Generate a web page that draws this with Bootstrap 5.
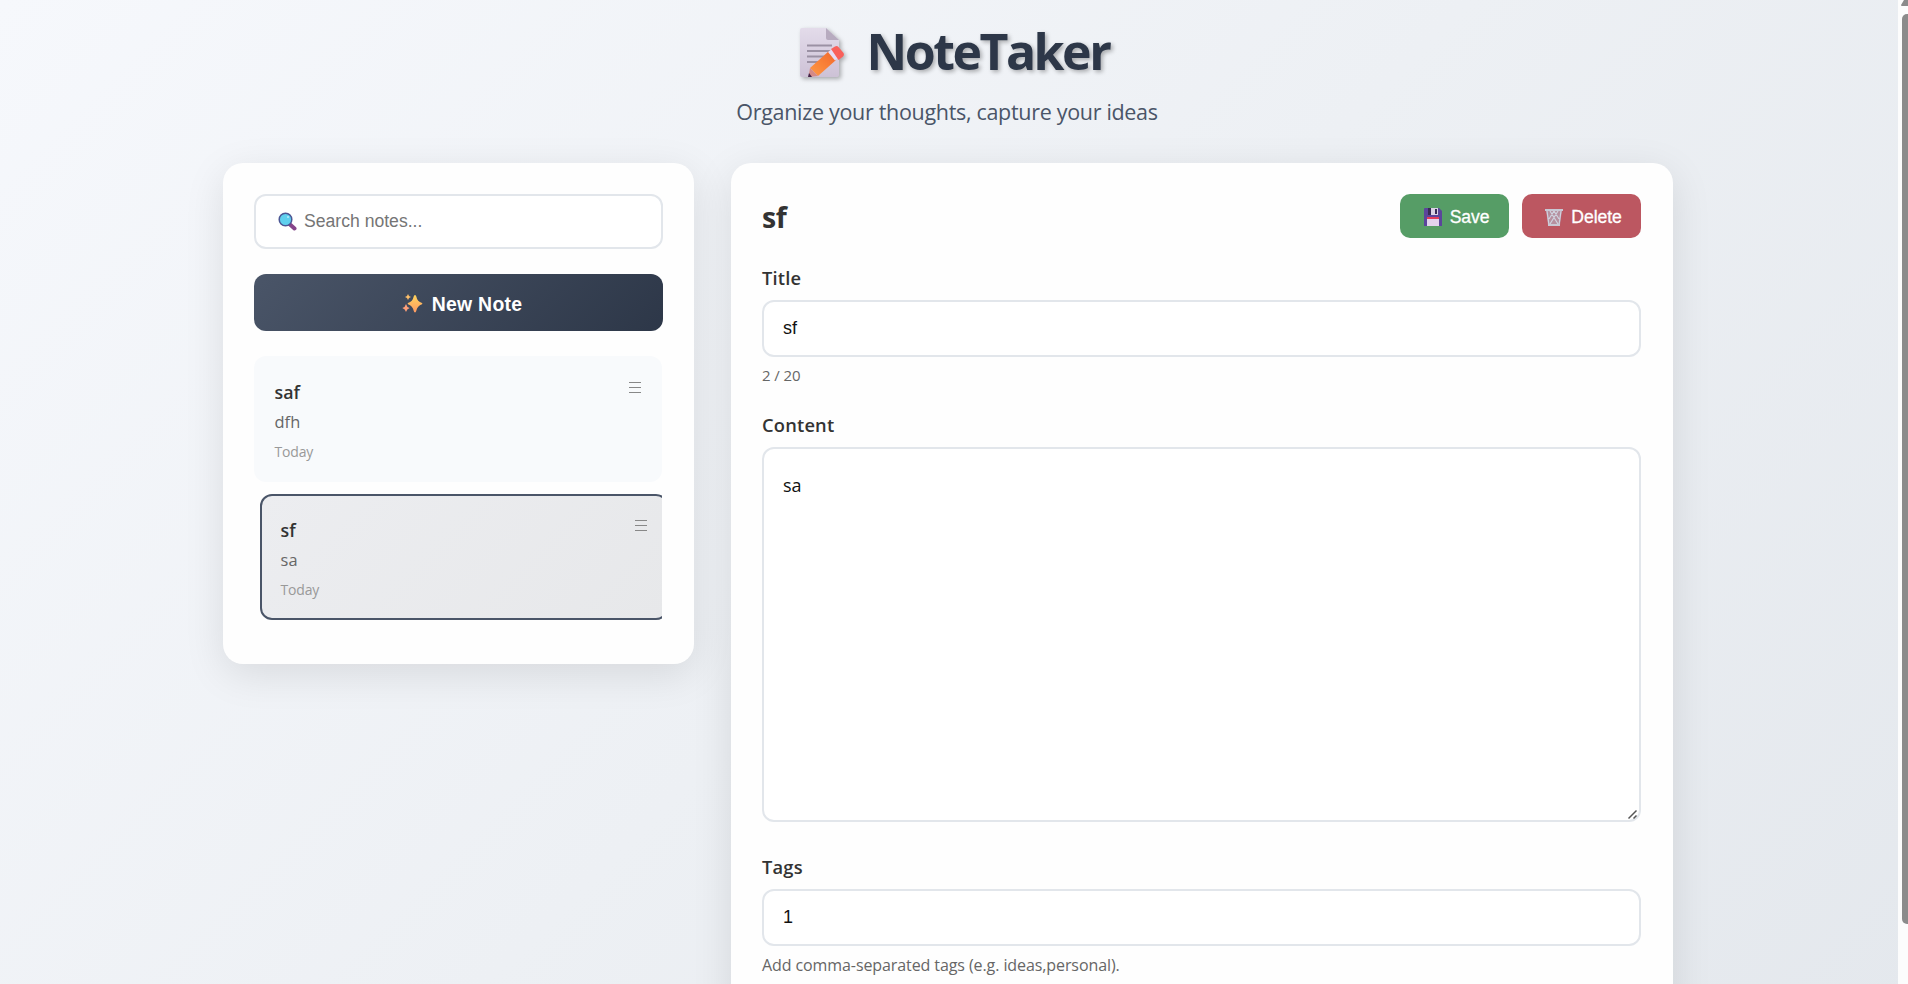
<!DOCTYPE html>
<html lang="en">
<head>
<meta charset="utf-8">
<meta name="viewport" content="width=device-width, initial-scale=1">
<title>NoteTaker</title>
<link href="https://cdn.jsdelivr.net/npm/bootstrap@5.3.0/dist/css/bootstrap.min.css" rel="stylesheet">
<style>
:root{--ui:"Open Sans","Noto Sans",sans-serif;--form:"Liberation Sans",Arial,sans-serif}
body{height:984px;overflow:hidden;font-family:var(--ui);color:#333;background:linear-gradient(135deg,#f6f8fc 0%,#edf0f4 50%,#e4e8ed 100%) 0 0/1898px 1038px no-repeat;font-size:16px}
.page{height:984px;overflow:hidden}
.layout{width:1450px;margin:0 auto}
.site-head{height:163px;padding-top:20px}
.brand{gap:22px;height:65px;margin-left:12px}
.brand h1{font-size:50px;font-weight:700;line-height:65px;color:#2d3748;margin:-3px 0 0;text-shadow:2px 2px 4px rgba(0,0,0,.3);letter-spacing:-2.500px}
.brand svg{filter:drop-shadow(2px 2px 2px rgba(0,0,0,.3))}
.tagline{font-size:21.5px;line-height:30px;color:#4a5568;margin:12px 2px 0 0;letter-spacing:-.31px}
.panel{background:#fefefe;border-radius:20px;padding:31px;box-shadow:0 10px 40px rgba(0,0,0,.1)}
.side{width:471px;height:501px}
.editor{width:942px;height:860px;padding-right:32px}
.field{display:block;width:100%;border:2px solid #e2e6eb;border-radius:12px;background:#fff;color:#111;font-family:var(--form);font-size:18px;padding:0 19px;height:57px;outline:0}
.search{height:55px;color:#757575;font-size:17.6px;gap:7px}
.new-note{height:57px;margin-top:25px;border-radius:12px;border:0;background:linear-gradient(135deg,#4a5568,#2d3748);color:#fff;font:700 19.4px var(--form);gap:9px;letter-spacing:.3px;padding:3px 0 0 7px}
.notes{width:408px;overflow:hidden;margin-top:25px;gap:12px}
.note{position:relative;height:126px;border-radius:12px;background:#f8fafc;border:2px solid transparent;padding:21px 18.6px 0}
.note.active{background:linear-gradient(135deg,#ecedf0,#e7e8ea);border-color:#4a5568;transform:translateX(6px)}
.note h2{font-size:17.8px;font-weight:600;line-height:26px;margin:0;color:#333}
.note p{font-size:16.4px;line-height:24px;margin:5px 0 0;color:#666}
.note time{display:block;font-size:14px;line-height:21px;margin-top:7px;color:#999;letter-spacing:-.2px}
.grip{position:absolute;right:19px;top:23px;width:12px;height:12px;display:block}
.ed-head{height:44px}
.ed-head h2{font-size:28.5px;font-weight:700;line-height:44px;margin:1px 0 0;color:#333;letter-spacing:-.4px}
.act{height:44px;border:0;border-radius:10px;color:#fff;font:400 17.6px var(--form);letter-spacing:-.1px;-webkit-text-stroke:.3px #fff;gap:8px;padding:2px 3px 0 7px}
.save{background:#569d66;width:109px}
.del{background:#bc5761;width:119px}
.lab{display:block;font-size:18.3px;font-weight:600;line-height:26px;color:#333;letter-spacing:.2px}
.count{font-size:15px;line-height:22px;color:#666;margin-top:7px;letter-spacing:-.1px}
.help{font-size:16px;letter-spacing:-.09px;margin-top:8px}
.body-text{font-family:var(--ui);height:375px;padding-top:22px;line-height:28px;resize:vertical}
.body-text::-webkit-resizer{background:url("data:image/svg+xml,%3Csvg xmlns='http://www.w3.org/2000/svg' width='15' height='15'%3E%3Cpath d='M4.500 13.500l8-8M9.500 13.500l3-3' stroke='%23555' stroke-width='1.500'/%3E%3C/svg%3E") no-repeat}
.bar{position:absolute;right:0;top:0;width:10px;height:984px;background:#fcfcfc}
.thumb{margin:14px 0 0 4px;height:910px;background:#8b8b8b;border-radius:5px 0 0 5px}
.arrow{position:absolute;left:3px;top:0}
</style>
</head>
<body>
<div class="d-flex">
<main class="page flex-grow-1" style="padding-right:12px">
 <div class="layout">
  <header class="site-head text-center">
   <div class="brand d-flex justify-content-center align-items-center">
    <svg width="46" height="51" viewBox="0 0 46 51"><defs><linearGradient id="pg" x2="0" y2="1"><stop stop-color="#e3dbea"/><stop offset="1" stop-color="#cdc2d6"/></linearGradient><linearGradient id="pn" x2="1" y1="1"><stop stop-color="#ff9a45"/><stop offset="1" stop-color="#f2672b"/></linearGradient></defs><path d="M3 1h24l13 12v35q0 2-2 2H3q-2 0-2-2V3q0-2 2-2z" fill="url(#pg)"/><path d="M27 1l13 12H29q-2 0-2-2z" fill="#b7abbf"/><path d="M8 18.500h25M8 24h25M8 29.500h18M8 35h12" stroke="#9b91a4" stroke-width="1.800"/><path d="M11 41l19-17 7 9-18 16z" fill="url(#pn)"/><path d="M29 25l4-3 7 8-4 3.500z" fill="#e6dcf5"/><path d="M32 22l4-2.500q2-1 3.500.5l5 6q1 2-.5 3.500l-4.500 3.500z" fill="#f9605b"/><path d="M11 41l8 8-9.500 1z" fill="#d58a86"/><path d="M10 46l3 4H9z" fill="#432348"/></svg>
    <h1>NoteTaker</h1>
   </div>
   <p class="tagline">Organize your thoughts, capture your ideas</p>
  </header>
  <div class="d-flex justify-content-between align-items-start">
   <aside class="panel side">
    <div class="field search d-flex align-items-center" style="padding-left:22px">
     <svg width="19" height="19" viewBox="0 0 19 19"><path d="M12 12.500l4.500 4" stroke="#86458a" stroke-width="4" stroke-linecap="round"/><circle cx="7.500" cy="7.500" r="6.300" fill="#5fd0ee" stroke="#4b5694" stroke-width="1.500"/><circle cx="10" cy="5" r="1" fill="#b9edfa"/></svg>
     <span>Search notes...</span>
    </div>
    <button class="new-note d-flex w-100 justify-content-center align-items-center">
     <svg width="21" height="20" viewBox="0 0 21 20"><defs><linearGradient id="sp" x2="0" y2="1"><stop stop-color="#ffd55c"/><stop offset="1" stop-color="#ff9a63"/></linearGradient></defs><path d="M13 1q1 0 1.300 1.500 1 5 5.700 6.500.8.500 0 1.200-4.700 1.500-5.700 6.500Q14 18.500 13 18.500t-1.300-1.800q-1-5-5.700-6.500-.8-.7 0-1.200 4.700-1.500 5.700-6.500Q12 1 13 1z" fill="url(#sp)"/><path d="M6 0q.5 2.500 3 3-2.500.7-3 3-.5-2.300-3-3 2.500-.5 3-3z" fill="#ffc06a"/><path d="M4 10q.7 3.200 3.700 4-3 .8-3.700 4-.7-3.200-3.700-4 3-.8 3.700-4z" fill="#ff9f78"/></svg>
     <span>New Note</span>
    </button>
    <div class="notes d-flex flex-column">
     <article class="note"><h2>saf</h2><p>dfh</p><time>Today</time><svg class="grip" viewBox="0 0 12 12"><path d="M0 1.500h12M0 6.500h12M0 11.500h12" stroke="#888"/></svg></article>
     <article class="note active"><h2>sf</h2><p>sa</p><time>Today</time><svg class="grip" viewBox="0 0 12 12"><path d="M0 1.500h12M0 6.500h12M0 11.500h12" stroke="#888"/></svg></article>
    </div>
   </aside>
   <section class="panel editor">
    <div class="ed-head d-flex justify-content-between">
     <h2>sf</h2>
     <div class="d-flex" style="gap:13px">
      <button class="act save d-flex justify-content-center align-items-center"><svg width="18" height="18" viewBox="0 0 18 18"><path d="M1 0h14l3 3v15H0V1q0-1 1-1z" fill="#5b459b"/><path d="M4 0h10v7H4z" fill="#d9d2e4"/><path d="M4 0h3v7H4zM11 1h2v5h-2z" fill="#382b55"/><path d="M3 10h12v8H3z" fill="#e3d3ed"/><path d="M3 9h12v2H3z" fill="#e43c5a"/></svg><span>Save</span></button>
      <button class="act del d-flex justify-content-center align-items-center"><svg width="18" height="18" viewBox="0 0 18 18"><path d="M1 2h16l-2 15H3z" fill="#b6909f"/><path d="M2 3l2 14h10l2-14M5 3l8 13M9 3l5 8M13 3L5 16M9 3l-5 8" fill="none" stroke="#d0d3df" stroke-width="1.200"/><path d="M0 1h18v2H0zM3 16h12v2H3z" fill="#c9c8d4"/></svg><span>Delete</span></button>
     </div>
    </div>
    <label class="lab" for="t" style="margin:27px 0 9px">Title</label>
    <input class="field" id="t" value="sf">
    <div class="count">2 / 20</div>
    <label class="lab" for="c" style="margin:26px 0 9px">Content</label>
    <textarea class="field body-text" id="c">sa</textarea>
    <label class="lab" for="g" style="margin:32px 0 9px">Tags</label>
    <input class="field" id="g" value="1">
    <div class="count help">Add comma-separated tags (e.g. ideas,personal).</div>
   </section>
  </div>
 </div>
</main>
</div>
<div class="bar"><svg class="arrow" width="7" height="7" viewBox="0 0 7 7"><path d="M7 0H3L0 5q0 1 1 1h6z" fill="#8b8b8b"/></svg><div class="thumb"></div></div>
<script src="https://cdn.jsdelivr.net/npm/bootstrap@5.3.0/dist/js/bootstrap.bundle.min.js"></script>
</body>
</html>
